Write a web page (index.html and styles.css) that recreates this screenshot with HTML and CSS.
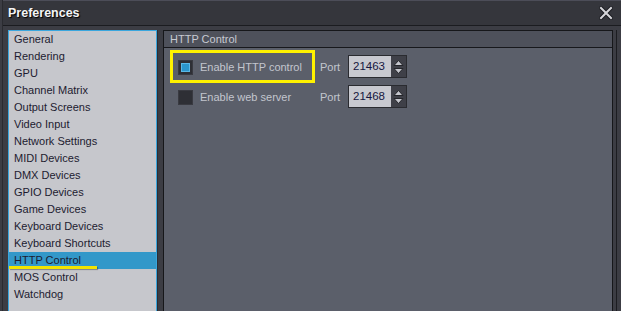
FILE: index.html
```html
<!DOCTYPE html>
<html lang="en">
<head>
    <meta charset="UTF-8">
    <title>Preferences</title>
    <link rel="stylesheet" href="styles.css">
</head>
<body>

<div class="window">
    <div class="titlebar">
        <span class="title">Preferences</span>
        <svg class="close" width="14" height="14" viewBox="0 0 14 14">
            <path d="M2 2 L12 12 M12 2 L2 12" stroke="#1c1d22" stroke-width="4" stroke-linecap="square"/>
            <path d="M2 2 L12 12 M12 2 L2 12" stroke="#d6d6da" stroke-width="2" stroke-linecap="square"/>
        </svg>
    </div>

    <div class="main">
        <ul class="sidebar">
            <li>General</li>
            <li>Rendering</li>
            <li>GPU</li>
            <li>Channel Matrix</li>
            <li>Output Screens</li>
            <li>Video Input</li>
            <li>Network Settings</li>
            <li>MIDI Devices</li>
            <li>DMX Devices</li>
            <li>GPIO Devices</li>
            <li>Game Devices</li>
            <li>Keyboard Devices</li>
            <li>Keyboard Shortcuts</li>
            <li class="selected">HTTP Control<span class="underline"></span></li>
            <li>MOS Control</li>
            <li>Watchdog</li>
        </ul>

        <div class="panel">
            <div class="panel-header">HTTP Control</div>
            <div class="panel-body">
                <div class="row">
                    <label class="option highlight">
                        <span class="check checked"><span></span></span>
                        Enable HTTP control
                    </label>
                    <span class="port-label">Port</span>
                    <div class="spin">
                        <span class="spin-value">21463</span>
                        <span class="spin-buttons">
                            <svg width="13" height="18" viewBox="0 0 13 18">
                                <path d="M2 7.5 L6.5 2.5 L11 7.5 Z M2 10.5 L6.5 15.5 L11 10.5 Z" fill="#c4c5cc" stroke="#25262b" stroke-width="1"/>
                            </svg>
                        </span>
                    </div>
                </div>
                <div class="row">
                    <label class="option">
                        <span class="check"></span>
                        Enable web server
                    </label>
                    <span class="port-label">Port</span>
                    <div class="spin">
                        <span class="spin-value">21468</span>
                        <span class="spin-buttons">
                            <svg width="13" height="18" viewBox="0 0 13 18">
                                <path d="M2 7.5 L6.5 2.5 L11 7.5 Z M2 10.5 L6.5 15.5 L11 10.5 Z" fill="#c4c5cc" stroke="#25262b" stroke-width="1"/>
                            </svg>
                        </span>
                    </div>
                </div>
            </div>
        </div>

        <div class="edge"></div>
    </div>
</div>

</body>
</html>
```

FILE: styles.css
```css
body {
    margin: 0;
    font-family: 'Liberation Sans', Arial, sans-serif;
    font-size: 11px;
    background-color: #3c3d44;
}
.window {
    width: 621px;
    height: 311px;
    overflow: hidden;
    border-left: 1px solid #2a2b30;
    margin-left: 2px;
    box-sizing: border-box;
}
.titlebar {
    height: 24px;
    margin-left: -3px;
    background-color: #35363c;
    border-top: 1px solid #4c4d58;
    border-bottom: 1px solid #1b1c20;
    display: flex;
    align-items: center;
    justify-content: space-between;
    padding: 0 10px 0 8px;
}
.title {
    color: #f4f4f6;
    font-weight: bold;
    font-size: 12.5px;
    text-shadow: 1px 1px 1px #000000;
}
.close {
    display: block;
}
.main {
    display: flex;
    padding: 4px 0 0 5px;
    height: 300px;
}
.sidebar {
    list-style: none;
    margin: 0;
    padding: 0;
    width: 147px;
    height: 320px;
    background-color: #c6c7cc;
    border: 1px solid #3aa6dd;
    box-shadow: 1px 0 0 #2c2d32;
}
.sidebar li {
    height: 17px;
    line-height: 17px;
    padding-left: 5px;
    color: #1d1b30;
    position: relative;
}
.sidebar li.selected {
    background-color: #3398c9;
}
.underline {
    position: absolute;
    left: 0;
    top: 14px;
    width: 88px;
    height: 3px;
    background-color: #f2e400;
    box-shadow: 1px 1px 1px rgba(0, 0, 0, 0.35);
}
.panel {
    margin-left: 6px;
    width: 448px;
    height: 320px;
    border: 1px solid #16171a;
    background-color: #5b5f6a;
}
.panel-header {
    height: 16px;
    line-height: 16px;
    padding-left: 6px;
    color: #c7cad2;
    background-color: #4e515b;
    border-bottom: 1px solid #17181c;
}
.panel-body {
    padding: 2px 0 0 6px;
}
.row {
    display: flex;
    align-items: center;
    height: 33px;
}
.row + .row {
    margin-top: -3px;
}
.option {
    display: flex;
    align-items: center;
    box-sizing: border-box;
    width: 145px;
    height: 33px;
    padding-left: 5px;
    border: 3px solid transparent;
    color: #c3c6ce;
    gap: 7px;
}
.option.highlight {
    border-color: #fff200;
}
.check {
    display: flex;
    align-items: center;
    justify-content: center;
    width: 15px;
    height: 15px;
    margin-top: 2px;
    box-sizing: border-box;
    background-color: #2e2f35;
    border: 1px solid #393a41;
}
.check.checked span {
    width: 9px;
    height: 9px;
    box-sizing: border-box;
    background-color: #2b96cc;
    border: 1px solid #5ab8e6;
}
.port-label {
    color: #c3c6ce;
    margin-left: 5px;
    width: 28px;
}
.spin {
    display: flex;
    height: 21px;
    border: 1px solid #2a2b30;
}
.spin-value {
    width: 38px;
    padding-left: 4px;
    line-height: 21px;
    font-size: 11.5px;
    color: #161640;
    background-color: #c8c9d0;
}
.spin-buttons {
    width: 15px;
    display: flex;
    align-items: center;
    justify-content: center;
    background-color: #3f4048;
}
.edge {
    margin-left: 3px;
    width: 1px;
    height: 320px;
    background-color: #1c1d21;
}
```
